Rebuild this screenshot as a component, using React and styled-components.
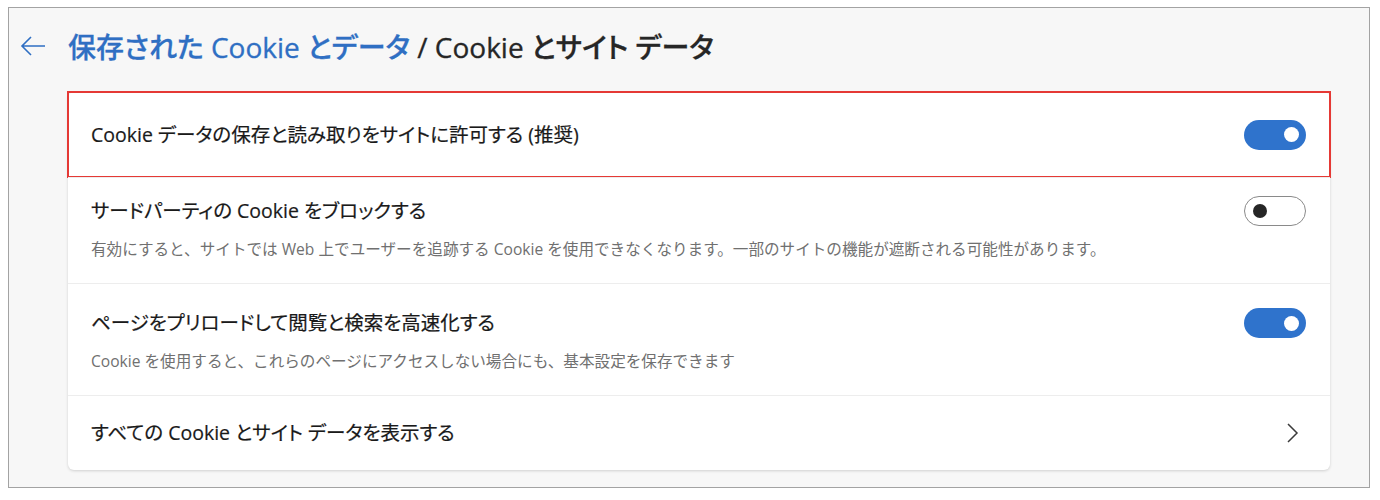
import React from "react";
import styled, { createGlobalStyle } from "styled-components";

const GlobalStyle = createGlobalStyle`
  body {
    margin: 0;
    background: #ffffff;
    font-family: "Open Sans", "Noto Sans CJK JP", sans-serif;
  }
`;

const Frame = styled.div`
  margin: 7px 0 0 8px;
  width: 1360px;
  height: 479px;
  border: 1px solid #a3a3a3;
  background: #f7f7f7;
  display: flex;
  flex-direction: column;
`;

const Header = styled.div`
  display: flex;
  align-items: center;
  height: 76px;
  padding-left: 11px;
`;

const BackButton = styled.div`
  width: 26px;
  height: 26px;
  margin-right: 22px;
  display: flex;
  align-items: center;
  color: #2f6fc3;
`;

const Title = styled.h1`
  margin: 0;
  font-size: 28px;
  font-weight: 500;
  color: #262626;
  font-feature-settings: "palt";
  -webkit-text-stroke: 0.3px currentColor;
`;

const Crumb = styled.span`
  color: #2f6fc3;
`;

const Card = styled.div`
  margin: 8px 39px 0 59px;
  background: #ffffff;
  border-radius: 6px;
  box-shadow: 0 1px 3px rgba(0, 0, 0, 0.16);
  display: flex;
  flex-direction: column;
`;

const Row = styled.div`
  display: flex;
  flex-direction: column;
  justify-content: ${(p) => (p.$pt ? "flex-start" : "center")};
  height: ${(p) => p.$h}px;
  padding: ${(p) => p.$pt || 0}px 24px 0 23px;
  box-sizing: border-box;
  border-top: ${(p) => (p.$first ? "none" : "1px solid #ededed")};
  outline: ${(p) => (p.$highlight ? "2px solid #e53935" : "none")};
  outline-offset: -1px;
`;

const Line = styled.div`
  display: flex;
  align-items: center;
  justify-content: space-between;
  height: 24px;
`;

const Label = styled.div`
  font-size: 19.5px;
  font-weight: 400;
  color: #1a1a1a;
  line-height: 24px;
  font-feature-settings: "palt";
  -webkit-text-stroke: 0.2px #1a1a1a;
`;

const Desc = styled.div`
  margin-top: 16px;
  font-size: 15.6px;
  color: #707070;
  line-height: 20px;
`;

const Toggle = styled.div`
  width: 62px;
  height: 30px;
  border-radius: 15px;
  box-sizing: border-box;
  flex-shrink: 0;
  background: ${(p) => (p.$on ? "#2f73cc" : "#ffffff")};
  border: ${(p) => (p.$on ? "none" : "1px solid #8a8a8a")};
  display: flex;
  align-items: center;
  justify-content: ${(p) => (p.$on ? "flex-end" : "flex-start")};
  padding: 0 ${(p) => (p.$on ? "7px" : "8px")};
`;

const Knob = styled.div`
  width: ${(p) => (p.$on ? 15 : 14)}px;
  height: ${(p) => (p.$on ? 15 : 14)}px;
  border-radius: 50%;
  background: ${(p) => (p.$on ? "#ffffff" : "#262626")};
`;

const Chevron = styled.div`
  width: 16px;
  height: 22px;
  margin-right: 6px;
  color: #3b3b3b;
  display: flex;
`;

const Switch = ({ on }) => (
  <Toggle $on={on}>
    <Knob $on={on} />
  </Toggle>
);

export default function App() {
  return (
    <>
      <GlobalStyle />
      <Frame>
        <Header>
          <BackButton>
            <svg width="26" height="26" viewBox="0 0 26 26" fill="none" stroke="currentColor" strokeWidth="1.6">
              <path d="M25 13H2M11 4l-9 9 9 9" />
            </svg>
          </BackButton>
          <Title>
            <Crumb>保存された Cookie とデータ</Crumb> / Cookie とサイト データ
          </Title>
        </Header>
        <Card>
          <Row $first $highlight $h={85}>
            <Line>
              <Label>Cookie データの保存と読み取りをサイトに許可する (推奨)</Label>
              <Switch on />
            </Line>
          </Row>
          <Row $pt={21} $h={106}>
            <Line>
              <Label>サードパーティの Cookie をブロックする</Label>
              <Switch />
            </Line>
            <Desc>
              有効にすると、サイトでは Web 上でユーザーを追跡する Cookie を使用できなくなります。一部のサイトの機能が遮断される可能性があります。
            </Desc>
          </Row>
          <Row $pt={27} $h={112}>
            <Line>
              <Label>ページをプリロードして閲覧と検索を高速化する</Label>
              <Switch on />
            </Line>
            <Desc>Cookie を使用すると、これらのページにアクセスしない場合にも、基本設定を保存できます</Desc>
          </Row>
          <Row $h={75}>
            <Line>
              <Label>すべての Cookie とサイト データを表示する</Label>
              <Chevron>
                <svg width="16" height="22" viewBox="0 0 16 22" fill="none" stroke="currentColor" strokeWidth="1.5">
                  <path d="M4 2l9 9-9 9" />
                </svg>
              </Chevron>
            </Line>
          </Row>
        </Card>
      </Frame>
    </>
  );
}
